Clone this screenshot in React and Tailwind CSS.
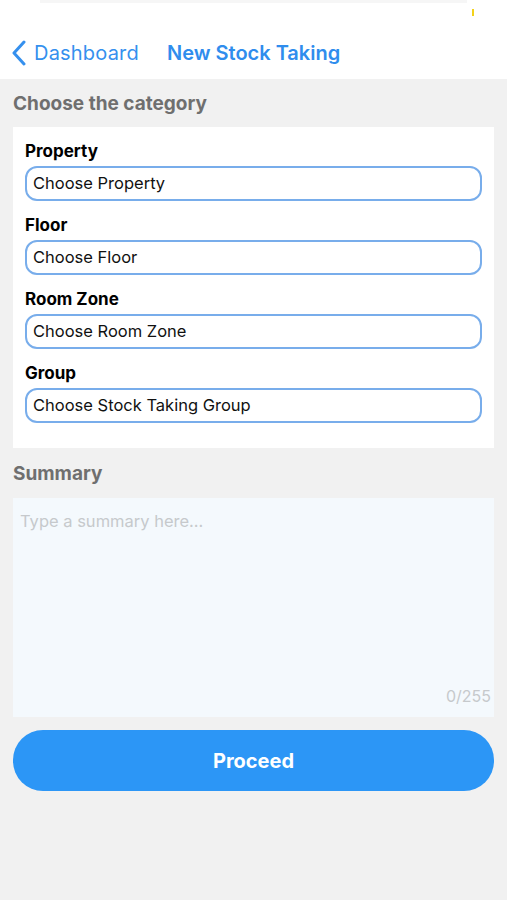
import React from "react";

function Field({ label, placeholder }) {
  return (
    <div className="flex flex-col">
      <div className="text-[17px] font-bold text-black leading-[22px] h-[26px]">{label}</div>
      <div className="h-[35px] rounded-[12px] border-2 border-[#78adeb] flex items-center px-[6px] text-[16.5px] text-[#111]">
        {placeholder}
      </div>
    </div>
  );
}

export default function App() {
  return (
    <div className="w-[507px] h-[900px] bg-[#f1f1f1] flex flex-col" style={{ fontFamily: "Inter, 'Liberation Sans', sans-serif" }}>
      <div className="bg-white h-[79px] flex flex-col relative">
        <div className="h-[3px] mx-[40px] bg-[#f6f6f6]" />
        <div className="absolute left-[472px] top-[9px] w-[2px] h-[7px] bg-[#f3d21a]" />
        <div className="flex items-center mt-[35px] pl-[11px]">
          <svg width="16" height="26" viewBox="0 0 16 26" className="mr-[7px]">
            <path d="M13 2 L3 13 L13 24" fill="none" stroke="#3590ee" strokeWidth="3" strokeLinecap="round" strokeLinejoin="round" />
          </svg>
          <span className="text-[20px] text-[#3590ee] tracking-[0.2px]">Dashboard</span>
          <span className="text-[20px] font-semibold text-[#2f8ded] ml-[28px]">New Stock Taking</span>
        </div>
      </div>
      <div className="px-[13px] flex flex-col">
        <div className="text-[19px] font-bold text-[#6f6f6f] mt-[12px] h-[36px] leading-[26px]">Choose the category</div>
        <div className="bg-white pl-[12px] pr-[12px] pt-[13px] pb-[25px] flex flex-col gap-[13px]">
          <Field label="Property" placeholder="Choose Property" />
          <Field label="Floor" placeholder="Choose Floor" />
          <Field label="Room Zone" placeholder="Choose Room Zone" />
          <Field label="Group" placeholder="Choose Stock Taking Group" />
        </div>
        <div className="text-[19px] font-bold text-[#6f6f6f] mt-[13px] h-[37px] leading-[26px]">Summary</div>
        <div className="bg-[#f4f9fd] h-[219px] flex flex-col justify-between pl-[7px] pr-[3px] pt-[11px] pb-[9px]">
          <div className="text-[16.5px] text-[#c6c9cc]">Type a summary here...</div>
          <div className="text-[16px] text-[#c6c9cc] text-right">0/255</div>
        </div>
        <div className="mt-[13px] h-[61px] rounded-[30px] bg-[#2c96f6] flex items-center justify-center text-white text-[20px] font-bold">
          Proceed
        </div>
      </div>
    </div>
  );
}
